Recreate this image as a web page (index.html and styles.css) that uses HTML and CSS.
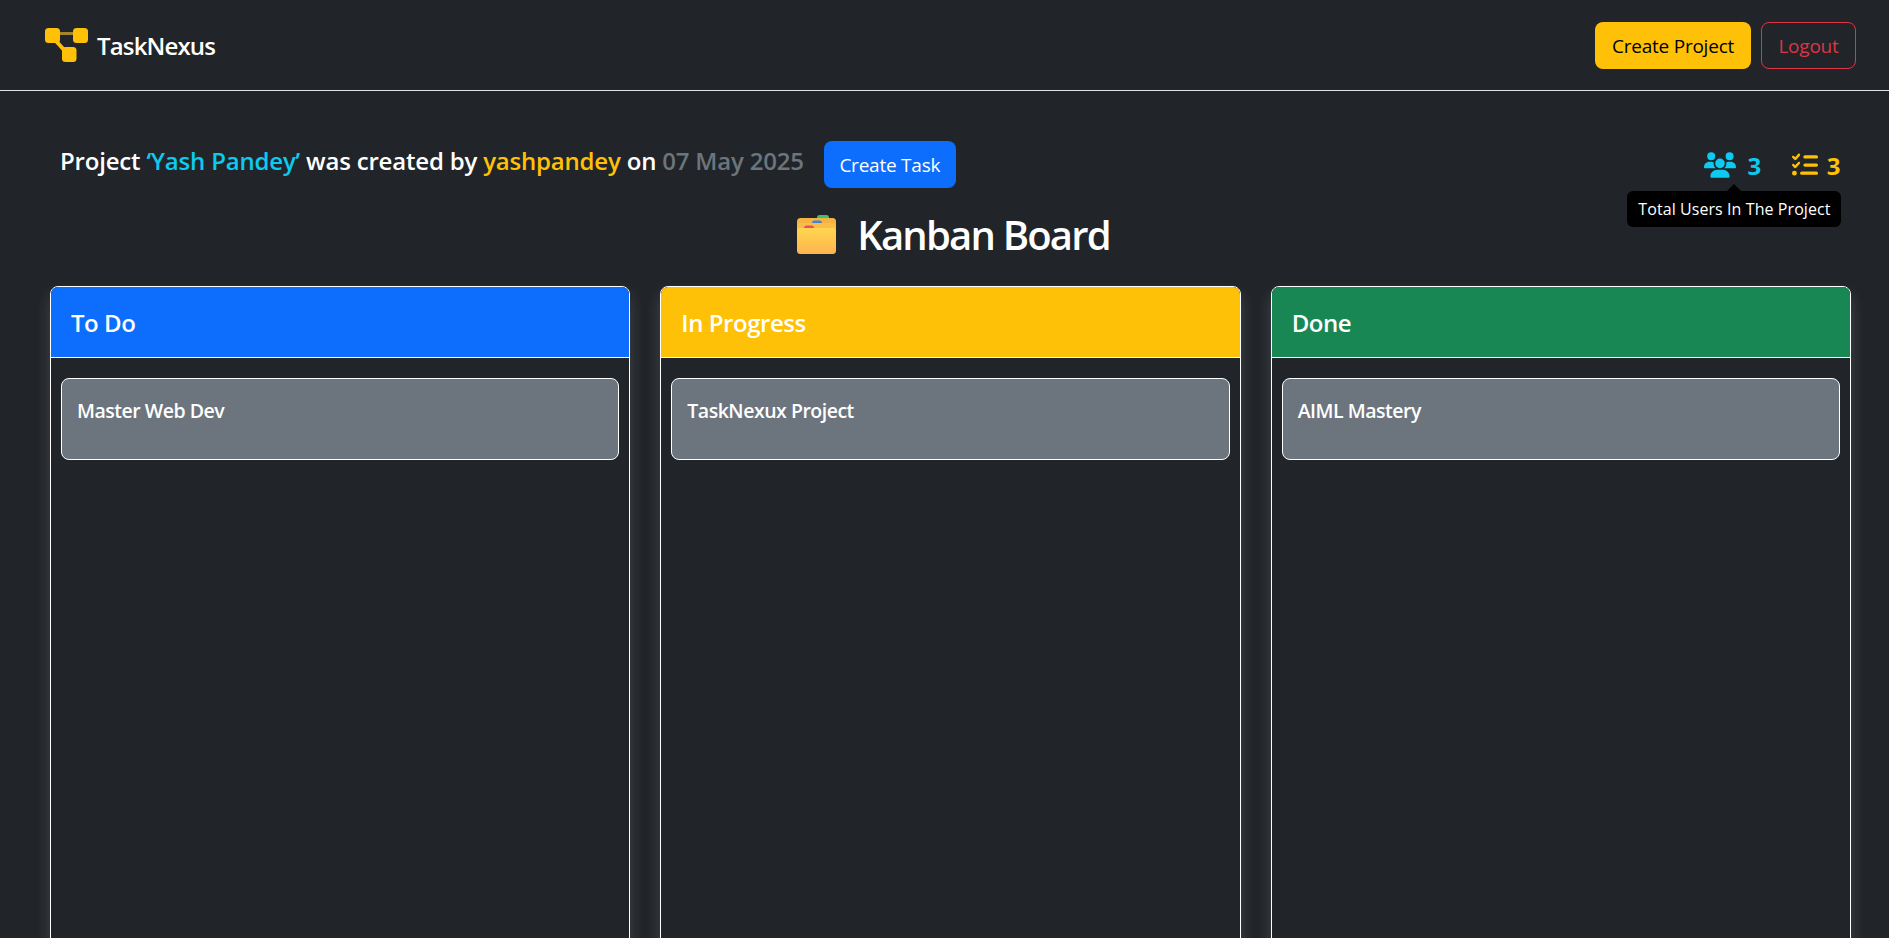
FILE: index.html
```html
<!DOCTYPE html>
<html lang="en">
<head>
<meta charset="utf-8">
<title>TaskNexus</title>
<link rel="stylesheet" href="styles.css">
</head>
<body>
<nav class="navbar">
  <a class="brand" href="#">
    <svg class="brand-logo" viewBox="0 0 43 34" aria-hidden="true">
      <path class="logo-link" d="M14 5.5H29"/>
      <path class="logo-stem" d="M11 13L20 23"/>
      <rect class="logo-node" x="0" y="0" width="15" height="15" rx="3.5"/>
      <rect class="logo-node" x="28" y="0" width="15" height="15" rx="3.5"/>
      <rect class="logo-node" x="17" y="19" width="14.5" height="15" rx="3.5"/>
    </svg>
    <span>TaskNexus</span>
  </a>
  <div class="nav-actions">
    <button class="btn btn-warning">Create Project</button>
    <button class="btn btn-outline-danger">Logout</button>
  </div>
</nav>
<main class="page">
  <section class="project-bar">
    <div class="project-info">
      <h2 class="project-line">Project <span class="c-info">‘Yash Pandey’</span> was created by <span class="c-warning">yashpandey</span> on <span class="c-muted">07 May 2025</span></h2>
      <button class="btn btn-primary">Create Task</button>
    </div>
    <div class="stats">
      <div class="stat c-info">
        <svg class="icon-users" viewBox="0 0 640 512" aria-hidden="true"><path d="M144 0a80 80 0 1 1 0 160A80 80 0 1 1 144 0zM512 0a80 80 0 1 1 0 160A80 80 0 1 1 512 0zM0 298.7C0 239.8 47.8 192 106.7 192h42.7c15.9 0 31 3.5 44.6 9.7c-1.3 7.2-1.9 14.7-1.9 22.3c0 38.2 16.8 72.5 43.3 96c-.2 0-.4 0-.7 0H21.3C9.6 320 0 310.4 0 298.7zM405.3 320c-.2 0-.4 0-.7 0c26.6-23.5 43.3-57.8 43.3-96c0-7.6-.7-15-1.9-22.3c13.6-6.3 28.7-9.7 44.6-9.7h42.7C592.2 192 640 239.8 640 298.7c0 11.8-9.6 21.3-21.3 21.3H405.3zM224 224a96 96 0 1 1 192 0 96 96 0 1 1 -192 0zM128 485.3C128 411.7 187.7 352 261.3 352H378.7C452.3 352 512 411.7 512 485.3c0 14.7-11.9 26.7-26.7 26.7H154.7c-14.7 0-26.7-11.9-26.7-26.7z"/></svg>
        <span class="stat-count">3</span>
        <div class="tooltip">Total Users In The Project</div>
      </div>
      <div class="stat stat-tasks c-warning">
        <svg class="icon-list" viewBox="0 0 512 512" aria-hidden="true"><path d="M152.1 38.2c9.9 8.9 10.7 24 1.8 33.9l-72 80c-4.4 4.9-10.6 7.8-17.2 7.9s-12.9-2.4-17.6-7L7 113C-2.3 103.6-2.3 88.4 7 79s24.6-9.4 33.9 0l22.1 22.1 55.1-61.2c8.9-9.9 24-10.7 33.9-1.8zm0 160c9.9 8.9 10.7 24 1.8 33.9l-72 80c-4.4 4.9-10.6 7.8-17.2 7.9s-12.9-2.4-17.6-7L7 273c-9.4-9.4-9.4-24.6 0-33.9s24.6-9.4 33.9 0l22.1 22.1 55.1-61.2c8.9-9.9 24-10.7 33.9-1.8zM224 96c0-17.7 14.3-32 32-32H480c17.7 0 32 14.3 32 32s-14.3 32-32 32H256c-17.7 0-32-14.3-32-32zm0 160c0-17.7 14.3-32 32-32H480c17.7 0 32 14.3 32 32s-14.3 32-32 32H256c-17.7 0-32-14.3-32-32zM160 416c0-17.7 14.3-32 32-32H480c17.7 0 32 14.3 32 32s-14.3 32-32 32H192c-17.7 0-32-14.3-32-32zM48 368a48 48 0 1 1 0 96 48 48 0 1 1 0-96z"/></svg>
        <span class="stat-count">3</span>
      </div>
    </div>
  </section>
  <h1 class="board-title">
    <svg class="folder-icon" viewBox="0 0 39 39" aria-hidden="true">
      <defs>
        <linearGradient id="folderFront" x1="0" y1="0" x2="0" y2="1">
          <stop offset="0" stop-color="#ffd64f"/>
          <stop offset="1" stop-color="#fdb44f"/>
        </linearGradient>
      </defs>
      <rect x="20" y="0" width="12" height="8" rx="2.5" fill="#3fc26f"/>
      <rect x="0" y="3" width="39" height="30" rx="3.5" fill="#f5b342"/>
      <rect x="15" y="5.5" width="10" height="7" rx="2.5" fill="#3f86d0"/>
      <rect x="0" y="8" width="39" height="28" rx="3.5" fill="#fbbd49"/>
      <rect x="7" y="10.5" width="10" height="7" rx="2.5" fill="#ef4b5f"/>
      <rect x="0" y="13" width="39" height="26" rx="3.5" fill="url(#folderFront)"/>
    </svg>
    <span>Kanban Board</span>
  </h1>
  <section class="board">
    <article class="column">
      <header class="column-head bg-primary">To Do</header>
      <div class="column-body"><div class="task"><h5>Master Web Dev</h5></div></div>
    </article>
    <article class="column">
      <header class="column-head bg-warning">In Progress</header>
      <div class="column-body"><div class="task"><h5>TaskNexux Project</h5></div></div>
    </article>
    <article class="column">
      <header class="column-head bg-success">Done</header>
      <div class="column-body"><div class="task"><h5>AIML Mastery</h5></div></div>
    </article>
  </section>
</main>
</body>
</html>
```

FILE: styles.css
```css
* { box-sizing: border-box; }
html, body { height: 100%; overflow: hidden; }
body {
  margin: 0;
  background: #212529;
  color: #fff;
  font-family: "Open Sans", "Noto Sans", "Liberation Sans", sans-serif;
  letter-spacing: -0.028em;
}
.navbar {
  height: 91px;
  display: flex;
  align-items: flex-start;
  justify-content: space-between;
  padding: 22px 33px 0 45px;
  border-bottom: 1px solid #dee2e6;
}
.brand {
  display: flex;
  align-items: center;
  gap: 9px;
  color: #fff;
  text-decoration: none;
  font-size: 24px;
  font-weight: 600;
  letter-spacing: -0.035em;
  margin-top: 6px;
}
.brand-logo { width: 43px; height: 34px; display: block; }
.logo-node { fill: #ffc107; }
.logo-link { fill: none; stroke: #a5852c; stroke-width: 3; }
.logo-stem { fill: none; stroke: #ffc107; stroke-width: 4; }
.nav-actions { display: flex; gap: 10px; }
.btn {
  height: 47px;
  padding: 0;
  border: 1px solid transparent;
  border-radius: 8px;
  font: inherit;
  font-size: 19px;
  letter-spacing: -0.012em;
  background: none;
  color: #fff;
}
.btn-warning { background: #ffc107; color: #000; width: 156px; }
.btn-outline-danger { border-color: #dc3545; color: #dc3545; width: 95px; }
.btn-primary { background: #0d6efd; width: 132px; }
.page { padding: 50px 38px 0 50px; }
.project-bar {
  display: flex;
  justify-content: space-between;
  align-items: flex-start;
  height: 47px;
}
.project-info { display: flex; align-items: flex-start; gap: 20px; padding-left: 10px; }
.project-line {
  margin: 0;
  font-size: 24px;
  font-weight: 600;
  letter-spacing: -0.008em;
  line-height: 40px;
  white-space: nowrap;
}
.c-info { color: #0dcaf0; }
.c-warning { color: #ffc107; }
.c-muted { color: #6c757d; }
.stats {
  display: flex;
  gap: 31px;
  padding-top: 10px;
  margin-right: 11px;
}
.stat {
  position: relative;
  display: flex;
  align-items: center;
  gap: 11px;
  font-size: 24px;
  font-weight: 700;
  line-height: 26px;
}
.stat-tasks { gap: 9px; }
.stat-count { margin-top: 2px; }
.icon-users { width: 32px; height: 26px; fill: currentColor; }
.icon-list { width: 26px; height: 26px; fill: currentColor; }
.tooltip {
  position: absolute;
  top: 40px;
  left: -77px;
  width: 214px;
  height: 36px;
  background: #000;
  color: #fff;
  border-radius: 6px;
  font-size: 16px;
  font-weight: 400;
  letter-spacing: 0.005em;
  line-height: 36px;
  text-align: center;
  white-space: nowrap;
}
.tooltip::before {
  content: "";
  position: absolute;
  top: -7px;
  left: 100px;
  border: 7px solid transparent;
  border-top: 0;
  border-bottom-color: #000;
}
.board-title {
  display: flex;
  justify-content: center;
  align-items: center;
  gap: 21px;
  height: 51px;
  margin: 21px 0 26px 6px;
  font-size: 40px;
  font-weight: 600;
  letter-spacing: -0.045em;
  line-height: 51px;
}
.folder-icon { width: 39px; height: 39px; display: block; }
.board {
  display: grid;
  grid-template-columns: repeat(3, 1fr);
  gap: 30px;
}
.column {
  height: 800px;
  border: 1px solid #fff;
  border-radius: 8px;
  box-shadow: 0 8px 16px rgba(255, 255, 255, 0.15);
  background: #212529;
}
.column-head {
  height: 71px;
  padding: 0 20px;
  border-bottom: 1px solid #fff;
  border-radius: 7px 7px 0 0;
  font-size: 24px;
  font-weight: 600;
  line-height: 71px;
}
.bg-primary { background: #0d6efd; }
.bg-warning { background: #ffc107; }
.bg-success { background: #198754; }
.column-body { padding: 20px 10px; }
.task {
  height: 82px;
  padding: 16px 15px;
  background: #6c757d;
  border: 1px solid #fff;
  border-radius: 8px;
}
.task h5 {
  margin: 0;
  font-size: 19.5px;
  font-weight: 600;
  letter-spacing: -0.025em;
  line-height: 31px;
}
```
